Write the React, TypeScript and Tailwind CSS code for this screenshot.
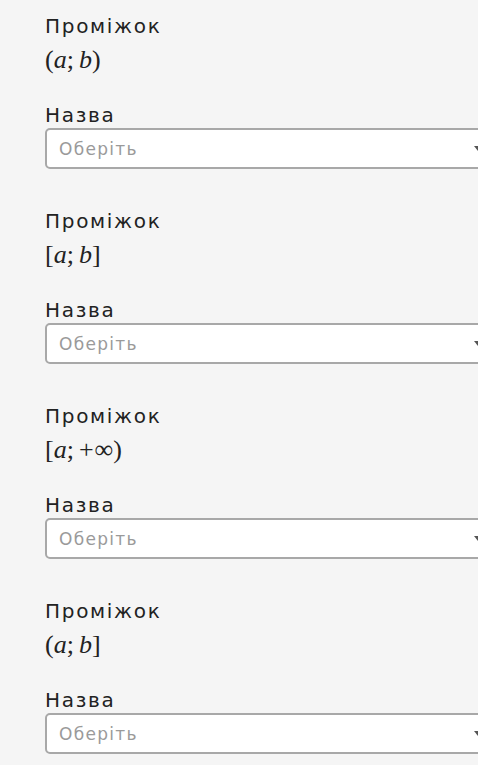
import React from 'react';

type Interval = {
  open: string;
  left: string;
  right: string;
  close: string;
  plus?: boolean;
};

const intervals: Interval[] = [
  { open: '(', left: 'a', right: 'b', close: ')' },
  { open: '[', left: 'a', right: 'b', close: ']' },
  { open: '[', left: 'a', right: '∞', close: ')', plus: true },
  { open: '(', left: 'a', right: 'b', close: ']' },
];

const MathInterval: React.FC<{ iv: Interval }> = ({ iv }) => (
  <div className="h-[32px] leading-[32px] text-[26px] text-[#222] font-['Liberation_Serif','DejaVu_Serif',serif] whitespace-nowrap">
    <span>{iv.open}</span>
    <span className="italic">{iv.left}</span>
    <span>;</span>
    <span className="ml-[5px]">{iv.plus ? '+' : ''}</span>
    {iv.plus ? (
      <span className="ml-[1px]">∞</span>
    ) : (
      <span className="italic">{iv.right}</span>
    )}
    <span>{iv.close}</span>
  </div>
);

const Block: React.FC<{ iv: Interval }> = ({ iv }) => (
  <div className="mb-[40px]">
    <div className="h-[24px] leading-[24px] text-[20px] tracking-[1.7px] text-[#222]">Проміжок</div>
    <div className="mt-[6px]">
      <MathInterval iv={iv} />
    </div>
    <div className="mt-[27px] h-[24px] leading-[24px] text-[20px] tracking-[1.7px] text-[#222]">Назва</div>
    <div className="relative mt-[1px] h-[41px] w-[450px] rounded-[5px] border-2 border-[#a8a8a8] bg-white">
      <span className="absolute left-[12px] top-[7px] text-[17px] leading-[24px] tracking-[1.3px] text-[#9a9a9a]">Оберіть</span>
      <span className="absolute left-[427px] top-[16px] h-0 w-0 border-x-[4px] border-t-[5px] border-x-transparent border-t-[#555]" />
    </div>
  </div>
);

export default function App() {
  return (
    <div className="w-[478px] h-[765px] overflow-hidden bg-[#f5f5f5] pl-[45px] pt-[14px] font-['DejaVu_Sans','Noto_Sans',sans-serif]">
      {intervals.map((iv, i) => (
        <Block key={i} iv={iv} />
      ))}
    </div>
  );
}
